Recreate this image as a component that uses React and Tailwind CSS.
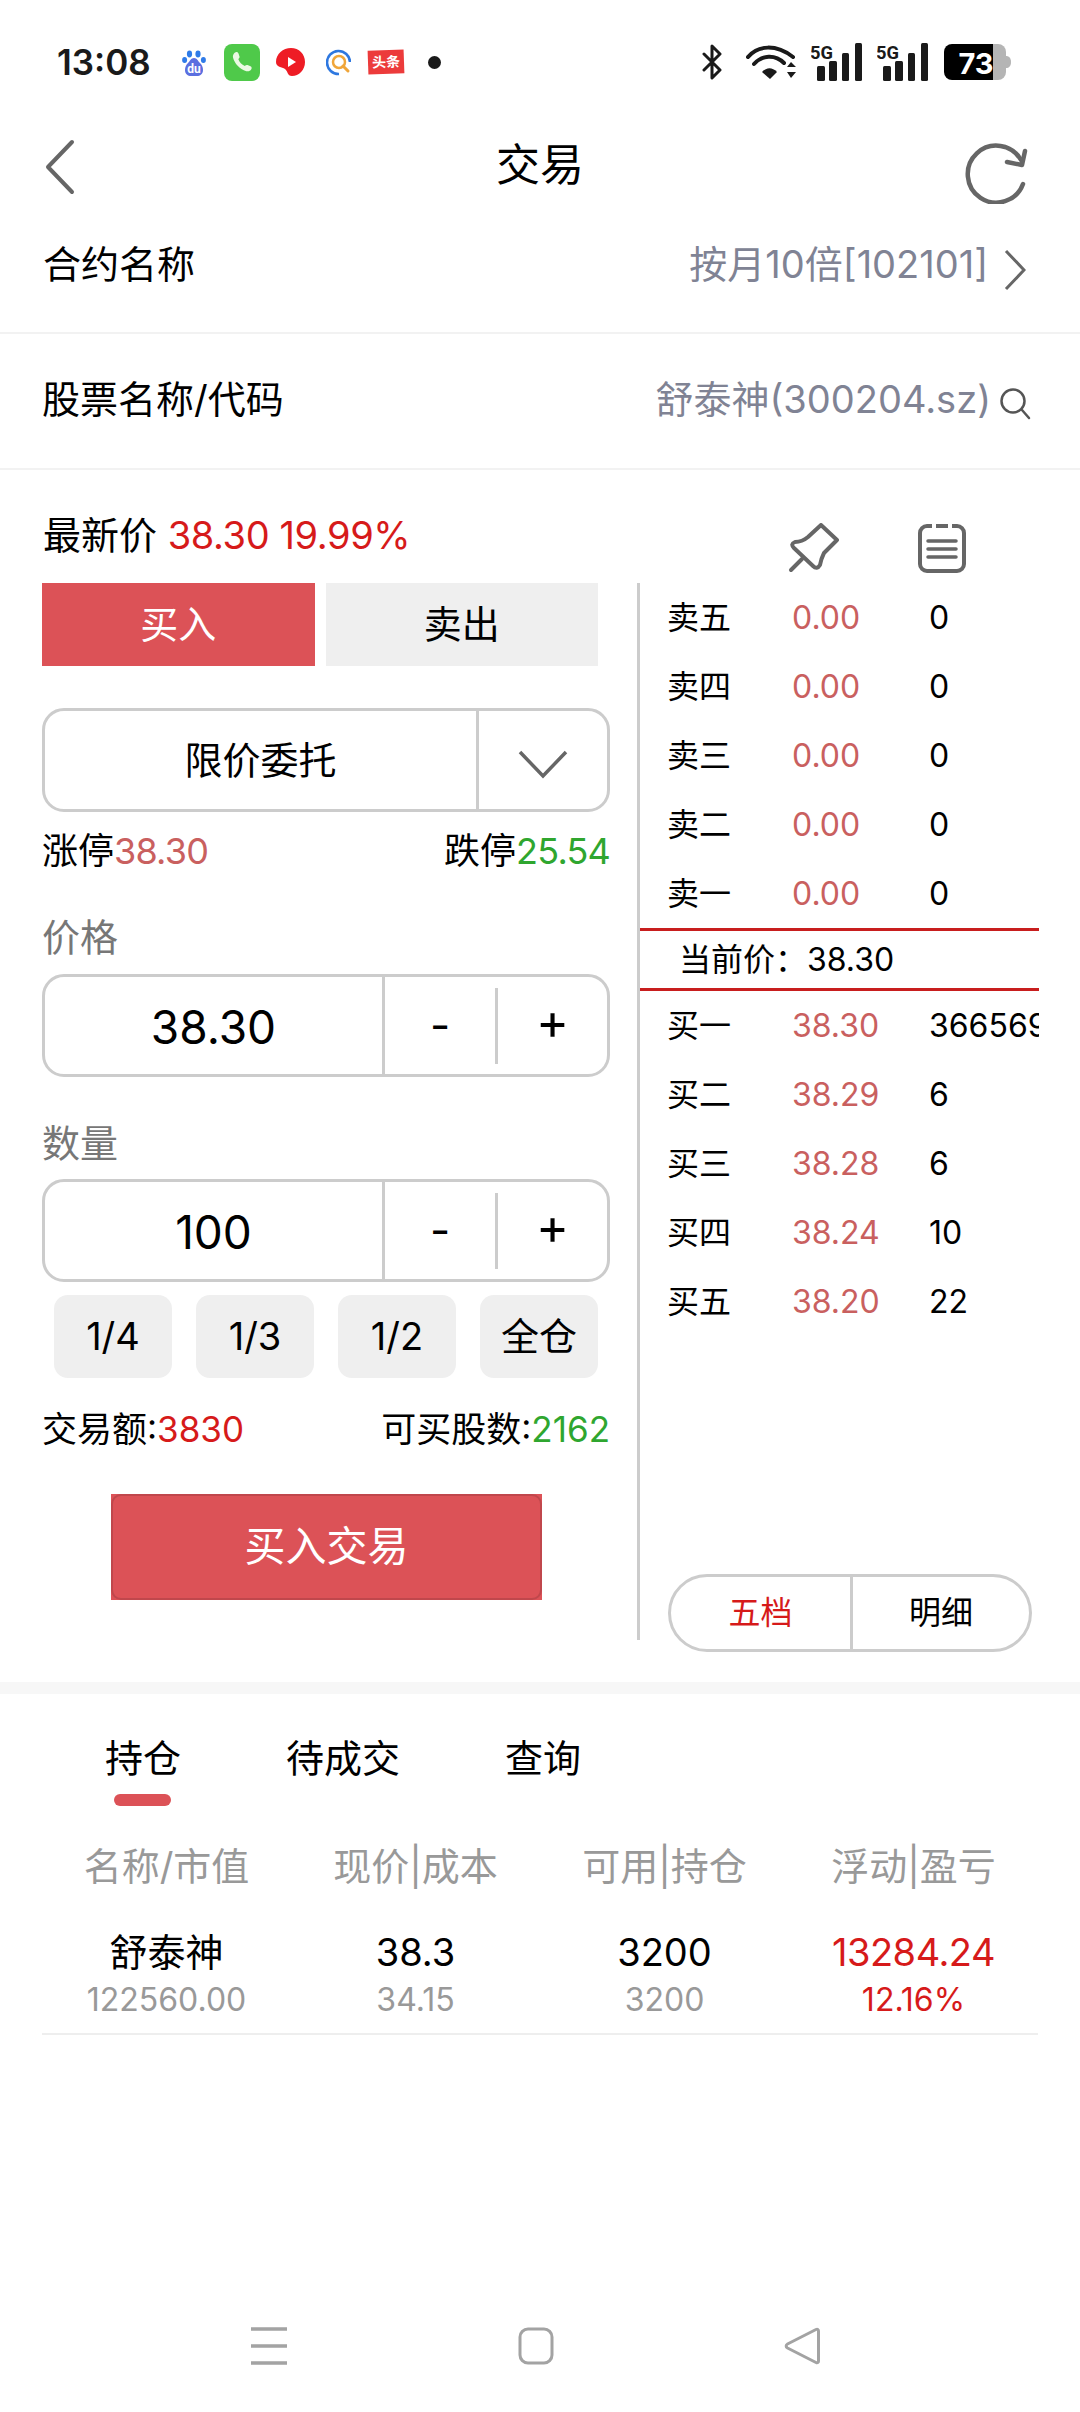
import React from 'react';

const asks = [
  ['卖五', '0.00', '0'],
  ['卖四', '0.00', '0'],
  ['卖三', '0.00', '0'],
  ['卖二', '0.00', '0'],
  ['卖一', '0.00', '0'],
];

const bids = [
  ['买一', '38.30', '3665693'],
  ['买二', '38.29', '6'],
  ['买三', '38.28', '6'],
  ['买四', '38.24', '10'],
  ['买五', '38.20', '22'],
];

const Signal = ({ className }) => (
  <svg width="51" height="38" viewBox="0 0 51 38" className={className}>
    <text x="-1" y="16" fontSize="18" fontWeight="700" fill="#1a1a1a" fontFamily="Roboto, sans-serif" textLength="23" lengthAdjust="spacingAndGlyphs">5G</text>
    <rect x="6" y="23" width="8" height="15" rx="1.5" fill="#1a1a1a" />
    <rect x="18" y="18" width="8" height="20" rx="1.5" fill="#1a1a1a" />
    <rect x="31" y="10" width="7" height="28" rx="1.5" fill="#1a1a1a" />
    <rect x="44" y="0" width="7" height="38" rx="1.5" fill="#1a1a1a" />
  </svg>
);

const StatusBar = () => (
  <div className="flex h-[124px] items-center pl-[57px] pr-[69px]">
    <span className="w-[125px] font-['Inter',sans-serif] text-[35px] font-semibold text-[#1a1a1a]">13:08</span>
    {/* baidu */}
    <svg width="24" height="27" viewBox="0 0 24 27">
      <ellipse cx="7.5" cy="5" rx="2.6" ry="3.4" fill="#2f7be8" />
      <ellipse cx="16" cy="5" rx="2.6" ry="3.4" fill="#2f7be8" />
      <ellipse cx="2.6" cy="11" rx="2.5" ry="3" fill="#2f7be8" />
      <ellipse cx="21.4" cy="11" rx="2.5" ry="3" fill="#2f7be8" />
      <path d="M12 9c-3 0-4 3-6 5-2 2-3 4-3 7 0 4 3 6 6 6h6c3 0 6-2 6-6 0-3-1-5-3-7-2-2-3-5-6-5z" fill="#5b6fe0" />
      <text x="12" y="24" textAnchor="middle" fontSize="12" fontWeight="700" fill="#fff" fontFamily="Roboto, sans-serif">du</text>
    </svg>
    {/* phone */}
    <div className="ml-[18px] flex h-[37px] w-[36px] items-center justify-center rounded-[8px] bg-[#4fc94a]">
      <svg width="24" height="24" viewBox="0 0 24 24">
        <path d="M5 2.5c1.500-1 3-.5 3.500 1l1 3c.3 1-.3 1.800-1.200 2.500 1 3 3.500 5.800 6.500 7 .8-.8 1.700-1.300 2.700-1l3 1.200c1.200.5 1.500 2 .8 3-1 1.800-3 2.500-5 2C9.500 19 4.500 13.500 3 7.500c-.4-2 .5-4 2-5z" fill="#eaf9e3" />
      </svg>
    </div>
    {/* red play */}
    <svg width="29" height="30" viewBox="0 0 29 30" className="ml-[16px]">
      <path d="M15 1c8 0 14 6 14 14 0 8-6 14-13 14-5 0-4-5-7-7-3-2-9-2-9-7C0 7 7 1 15 1z" fill="#ee1c25" />
      <path d="M12 10l8 5-8 5z" fill="#fff" />
    </svg>
    {/* search q */}
    <svg width="25" height="27" viewBox="0 0 25 27" className="ml-[21px]">
      <path d="M24 13A11.500 11.500 0 1 0 13 25" fill="none" stroke="#2e78e0" strokeWidth="2.600" />
      <circle cx="13" cy="13" r="6" fill="none" stroke="#f0a63a" strokeWidth="2.500" />
      <path d="M17 17l5 5" stroke="#f0a63a" strokeWidth="3" strokeLinecap="round" />
    </svg>
    {/* toutiao */}
    <div className="ml-[17px] flex h-[24px] w-[36px] -rotate-2 items-center justify-center bg-[#ec3b3b] text-[14px] font-bold leading-none text-white">头条</div>
    <div className="ml-[24px] h-[13px] w-[13px] rounded-full bg-[#1a1a1a]" />

    <div className="ml-auto flex items-center">
      {/* bluetooth */}
      <svg width="21" height="38" viewBox="0 0 21 38">
        <path d="M2 11l16 16-8 8V3l8 8-16 16" fill="none" stroke="#1a1a1a" strokeWidth="3" strokeLinejoin="round" strokeLinecap="round" />
      </svg>
      {/* wifi */}
      <svg width="50" height="38" viewBox="0 0 50 38" className="ml-[23px]">
        <path d="M2 14C12 2 30 1 47 14" fill="none" stroke="#1a1a1a" strokeWidth="4" strokeLinecap="round" />
        <path d="M8 21C16 12 29 11 38 20" fill="none" stroke="#1a1a1a" strokeWidth="4" strokeLinecap="round" />
        <path d="M16 29c5-5 10-5 15 0l-7 7z" fill="#1a1a1a" />
        <path d="M41 24l4-5 5 5zM41 29h9l-5 6z" fill="#1a1a1a" />
      </svg>
      <Signal className="ml-[15px]" />
      <Signal className="ml-[15px]" />
      {/* battery */}
      <svg width="67" height="36" viewBox="0 0 67 36" className="ml-[16px]">
        <path d="M49 0h5a8 8 0 0 1 8 8v20a8 8 0 0 1-8 8h-5z" fill="#b5b5b5" />
        <path d="M62 12c3 0 5 2 5 6s-2 6-5 6z" fill="#b5b5b5" />
        <path d="M8 0h41v36H8a8 8 0 0 1-8-8V8a8 8 0 0 1 8-8z" fill="#000" />
        <text x="32" y="30" textAnchor="middle" fontSize="29" fontWeight="700" fill="#fff" fontFamily="Inter, sans-serif">73</text>
      </svg>
    </div>
  </div>
);

const Header = () => (
  <div className="flex h-[82px] items-center px-[45px]">
    <div className="flex-1">
      <svg width="30" height="56" viewBox="0 0 30 56" className="mt-[4px]">
        <path d="M27 3L3 28l24 25" fill="none" stroke="#666" strokeWidth="4" strokeLinecap="round" strokeLinejoin="round" />
      </svg>
    </div>
    <div className="text-[44px] text-black">交易</div>
    <div className="flex flex-1 justify-end">
      <svg width="64" height="62" viewBox="0 0 64 62" className="mr-[7px] mt-[16px]">
        <path d="M59 42A28.500 28.500 0 1 1 57 18" fill="none" stroke="#666" strokeWidth="4.500" strokeLinecap="round" />
        <path d="M61 9L58 23L43 20" fill="none" stroke="#666" strokeWidth="4.500" strokeLinecap="round" strokeLinejoin="round" />
      </svg>
    </div>
  </div>
);

const Stepper = ({ value }) => (
  <div className="flex h-[103px] w-[568px] overflow-hidden rounded-[22px] border-[3px] border-[#cccccc]">
    <div className="flex w-[337px] items-center justify-center pt-[4px] text-[46px] text-black">{value}</div>
    <div className="flex flex-1 items-center border-l-[3px] border-[#cccccc]">
      <div className="flex w-[110px] items-center justify-center pb-[2px] text-[44px] text-black">-</div>
      <div className="h-[76px] w-[3px] bg-[#cccccc]" />
      <div className="flex flex-1 items-center justify-center pb-[8px] text-[50px] text-black">+</div>
    </div>
  </div>
);

const OrderRow = ({ row }) => (
  <div className="flex h-[69px] items-center pl-[27px] text-[32px] whitespace-nowrap">
    <span className="w-[125px] shrink-0 text-black">{row[0]}</span>
    <span className="w-[137px] shrink-0 text-[#c9605f]">{row[1]}</span>
    <span className="shrink-0 text-black">{row[2]}</span>
  </div>
);

const TradePanel = () => (
  <div className="flex h-[1057px] w-[640px] shrink-0 flex-col border-r-[3px] border-[#cccccc] pl-[42px]">
    <div className="flex h-[83px] w-[556px] gap-[11px] text-[38px]">
      <div className="flex flex-1 items-center justify-center bg-[#dc5257] text-white">买入</div>
      <div className="flex flex-1 items-center justify-center bg-[#efefef] text-black">卖出</div>
    </div>

    <div className="mt-[42px] flex h-[104px] w-[568px] overflow-hidden rounded-[22px] border-[3px] border-[#cccccc]">
      <div className="flex w-[431px] items-center justify-center text-[38px] text-black">限价委托</div>
      <div className="flex flex-1 items-center justify-center border-l-[3px] border-[#cccccc] pt-[8px]">
        <svg width="50" height="30" viewBox="0 0 50 30">
          <path d="M2 3l23 24L48 3" fill="none" stroke="#666" strokeWidth="3.500" />
        </svg>
      </div>
    </div>

    <div className="flex h-[78px] w-[568px] items-center justify-between text-[36px]">
      <span className="text-black">涨停<span className="tracking-[-0.8px] text-[#c9605f]">38.30</span></span>
      <span className="text-black">跌停<span className="tracking-[-0.8px] text-[#2fa62f]">25.54</span></span>
    </div>

    <div className="flex h-[84px] items-center pt-[10px] text-[38px] text-[#777777]">价格</div>
    <Stepper value="38.30" />

    <div className="flex h-[102px] items-center pt-[30px] text-[38px] text-[#777777]">数量</div>
    <Stepper value="100" />

    <div className="mt-[13px] flex gap-[24px] pl-[12px]">
      {['1/4', '1/3', '1/2', '全仓'].map((t) => (
        <div key={t} className="flex h-[83px] w-[118px] items-center justify-center rounded-[14px] bg-[#efefef] text-[38px] text-black">{t}</div>
      ))}
    </div>

    <div className="mt-[20px] flex h-[62px] w-[568px] items-center justify-between text-[35px] text-black">
      <span>交易额:<span className="text-[#d61a1a]">3830</span></span>
      <span>可买股数:<span className="text-[#2fa62f]">2162</span></span>
    </div>

    <div className="ml-[69px] mt-[34px] h-[106px] w-[431px] bg-[#dc5257]">
      <div className="flex h-full items-center justify-center rounded-[10px] border-2 border-[#c0474c] text-[41px] text-white">买入交易</div>
    </div>
  </div>
);

const OrderBook = () => (
  <div className="flex flex-1 flex-col overflow-hidden pb-[30px]">
    <div className="w-[399px] overflow-hidden">
      {asks.map((r) => <OrderRow key={r[0]} row={r} />)}
      <div className="flex h-[63px] items-center border-y-[3px] border-[#c81e1e] pl-[39px] text-[32px] text-black">
        当前价：<span>38.30</span>
      </div>
      {bids.map((r) => <OrderRow key={r[0]} row={r} />)}
    </div>

    <div className="ml-[28px] mt-auto flex h-[78px] w-[364px] overflow-hidden rounded-full border-[3px] border-[#cccccc] text-[32px]">
      <div className="flex w-[182px] items-center justify-center border-r-[3px] border-[#cccccc] text-[#d61a1a]">五档</div>
      <div className="flex flex-1 items-center justify-center text-black">明细</div>
    </div>
  </div>
);

const Holdings = () => (
  <div>
    <div className="flex h-[100px] gap-[105px] pl-[105px] pt-[28px] text-[38px] leading-[72px] text-black">
      <span>持仓</span>
      <span>待成交</span>
      <span>查询</span>
    </div>
    <div className="ml-[114px] h-[12px] w-[57px] rounded-full bg-[#dc5257]" />

    <div className="grid h-[120px] grid-cols-4 items-center px-[42px] text-center text-[38px] text-[#999999]">
      <span>名称/市值</span>
      <span>现价|成本</span>
      <span>可用|持仓</span>
      <span>浮动|盈亏</span>
    </div>

    <div className="mx-[42px] grid h-[109px] grid-cols-4 border-b-2 border-[#eeeeee] pt-[2px] text-center">
      <div>
        <div className="text-[38px] leading-[48px] text-black">舒泰神</div>
        <div className="text-[32px] leading-[48px] text-[#999999]">122560.00</div>
      </div>
      <div>
        <div className="text-[38px] leading-[48px] text-black">38.3</div>
        <div className="text-[32px] leading-[48px] text-[#999999]">34.15</div>
      </div>
      <div>
        <div className="text-[38px] leading-[48px] text-black">3200</div>
        <div className="text-[32px] leading-[48px] text-[#999999]">3200</div>
      </div>
      <div>
        <div className="text-[38px] leading-[48px] tracking-[-0.5px] text-[#d61a1a]">13284.24</div>
        <div className="text-[32px] leading-[48px] text-[#d61a1a]">12.16%</div>
      </div>
    </div>
  </div>
);

const NavBar = () => (
  <div className="mt-auto flex h-[132px] items-center justify-between pl-[251px] pr-[260px]">
    <svg width="36" height="38" viewBox="0 0 36 38">
      <path d="M0 2h36M0 19h36M0 36h36" stroke="#a3a3a3" strokeWidth="3.500" />
    </svg>
    <svg width="36" height="38" viewBox="0 0 36 38">
      <rect x="2" y="2" width="32" height="34" rx="8" fill="none" stroke="#a3a3a3" strokeWidth="3" />
    </svg>
    <svg width="36" height="38" viewBox="0 0 36 38">
      <path d="M32 2.500c1.500-.8 2.500 0 2.500 1.500v30c0 1.500-1 2.300-2.500 1.500L3.500 21c-1.800-1-1.800-3 0-4z" fill="none" stroke="#a3a3a3" strokeWidth="3" strokeLinejoin="round" />
    </svg>
  </div>
);

export default function App() {
  return (
    <div className="flex h-[2412px] w-[1080px] flex-col overflow-hidden bg-white font-['Inter','Noto_Sans_CJK_SC',sans-serif]">
      <StatusBar />
      <Header />

      {/* contract */}
      <div className="flex h-[128px] items-center justify-between border-b-2 border-[#f2f2f2] pb-[10px] pl-[43px] pr-[54px]">
        <span className="text-[38px] text-black">合约名称</span>
        <span className="flex items-center text-[38px] text-[#808394]">
          按月10倍[102101]
          <svg width="22" height="42" viewBox="0 0 22 42" className="ml-[16px] mt-[12px]">
            <path d="M2 2l18 19L2 40" fill="none" stroke="#666" strokeWidth="3" />
          </svg>
        </span>
      </div>

      {/* stock */}
      <div className="flex h-[136px] items-center justify-between border-b-2 border-[#f2f2f2] pb-[4px] pl-[42px] pr-[49px]">
        <span className="text-[38px] text-black">股票名称/代码</span>
        <span className="flex items-center text-[38px] text-[#808394]">
          舒泰神(300204.sz)
          <svg width="32" height="34" viewBox="0 0 32 34" className="ml-[8px] mt-[10px]">
            <circle cx="14" cy="14" r="11.500" fill="none" stroke="#555" strokeWidth="2.500" />
            <path d="M23 23l7 8" stroke="#555" strokeWidth="2.500" strokeLinecap="round" />
          </svg>
        </span>
      </div>

      {/* price line + tools */}
      <div className="flex h-[113px] items-start pl-[43px] pr-[114px]">
        <div className="mt-[42px] text-[38px] leading-[46px] text-black">
          最新价 <span className="tracking-[-0.4px] text-[#d61a1a]">38.30 19.99%</span>
        </div>
        <div className="ml-auto mt-[53px] flex gap-[79px]">
          <svg width="51" height="50" viewBox="0 0 51 50">
            <path d="M33 2L49 17L36 30Q33 36 32 42Q29 47 25 43L6 25Q2 21 7 19Q14 19 20 14Z" fill="none" stroke="#666" strokeWidth="4" strokeLinejoin="round" />
            <path d="M14 36L3 47" stroke="#666" strokeWidth="4" strokeLinecap="round" />
          </svg>
          <svg width="48" height="50" viewBox="0 0 48 50">
            <path d="M14 3H9a7 7 0 0 0-7 7v31a7 7 0 0 0 7 7h30a7 7 0 0 0 7-7V10a7 7 0 0 0-7-7h-5" fill="none" stroke="#666" strokeWidth="4" />
            <path d="M18 3h12" stroke="#666" strokeWidth="4" />
            <path d="M10 18h28M10 26h28M10 34h28" stroke="#666" strokeWidth="3.500" strokeLinecap="round" />
          </svg>
        </div>
      </div>

      <div className="flex h-[1099px]">
        <TradePanel />
        <OrderBook />
      </div>

      <div className="h-[12px] bg-[#f7f7f7]" />
      <Holdings />
      <NavBar />
    </div>
  );
}
